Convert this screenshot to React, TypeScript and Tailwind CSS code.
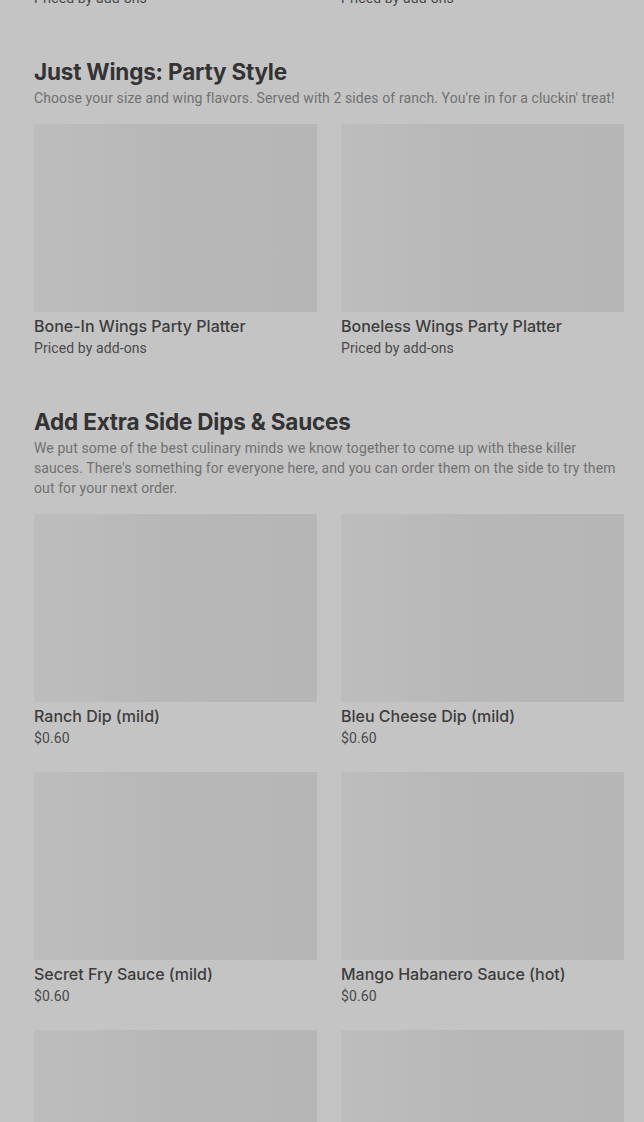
const sections = [
  {
    title: "Just Wings: Party Style",
    description:
      "Choose your size and wing flavors. Served with 2 sides of ranch. You're in for a cluckin' treat!",
    items: [
      { name: "Bone-In Wings Party Platter", price: "Priced by add-ons" },
      { name: "Boneless Wings Party Platter", price: "Priced by add-ons" },
    ],
  },
  {
    title: "Add Extra Side Dips & Sauces",
    description:
      "We put some of the best culinary minds we know together to come up with these killer sauces. There's something for everyone here, and you can order them on the side to try them out for your next order.",
    items: [
      { name: "Ranch Dip (mild)", price: "$0.60" },
      { name: "Bleu Cheese Dip (mild)", price: "$0.60" },
      { name: "Secret Fry Sauce (mild)", price: "$0.60" },
      { name: "Mango Habanero Sauce (hot)", price: "$0.60" },
      { name: "Buffalo Sauce (medium)", price: "$0.60" },
      { name: "Garlic Parmesan Sauce (mild)", price: "$0.60" },
    ],
  },
];

type Item = { name: string; price: string };

const body = { fontFamily: "Roboto, 'Liberation Sans', sans-serif" };

function ItemCard({ item }: { item: Item }) {
  return (
    <div className="flex flex-col">
      <div className="h-[188px] w-full bg-gradient-to-r from-[#bdbdbd] via-[#b7b7b7] to-[#b6b6b6]" />
      <div className="mt-[4px] text-[16px] leading-[20px] font-medium text-[#3d3d3d]">
        {item.name}
      </div>
      <div className="mt-[2px] text-[14px] leading-[20px] tracking-[0.1px] text-[#4a4a4a]" style={body}>
        {item.price}
      </div>
    </div>
  );
}

export default function App() {
  return (
    <div
      className="h-screen overflow-hidden bg-[#c4c4c4] pl-[34px] pr-[20px]"
      style={{ fontFamily: "Inter, 'Liberation Sans', sans-serif" }}
    >
      <div className="-mt-[12px] grid grid-cols-2 gap-x-[24px] tracking-[0.1px]" style={body}>
        <div className="text-[14px] leading-[20px] text-[#4a4a4a]">Priced by add-ons</div>
        <div className="text-[14px] leading-[20px] text-[#4a4a4a]">Priced by add-ons</div>
      </div>
      {sections.map((section) => (
        <section key={section.title} className="pt-[50px]">
          <h2 className="text-[22.5px] leading-[28px] font-bold tracking-[-0.2px] text-[#333333]">
            {section.title}
          </h2>
          <p className="mt-[2px] text-[14px] leading-[20px] tracking-[0.1px] text-[#717171]" style={body}>
            {section.description}
          </p>
          <div className="mt-[16px] grid grid-cols-2 gap-x-[24px] gap-y-[24px]">
            {section.items.map((item) => (
              <ItemCard key={item.name} item={item} />
            ))}
          </div>
        </section>
      ))}
    </div>
  );
}
